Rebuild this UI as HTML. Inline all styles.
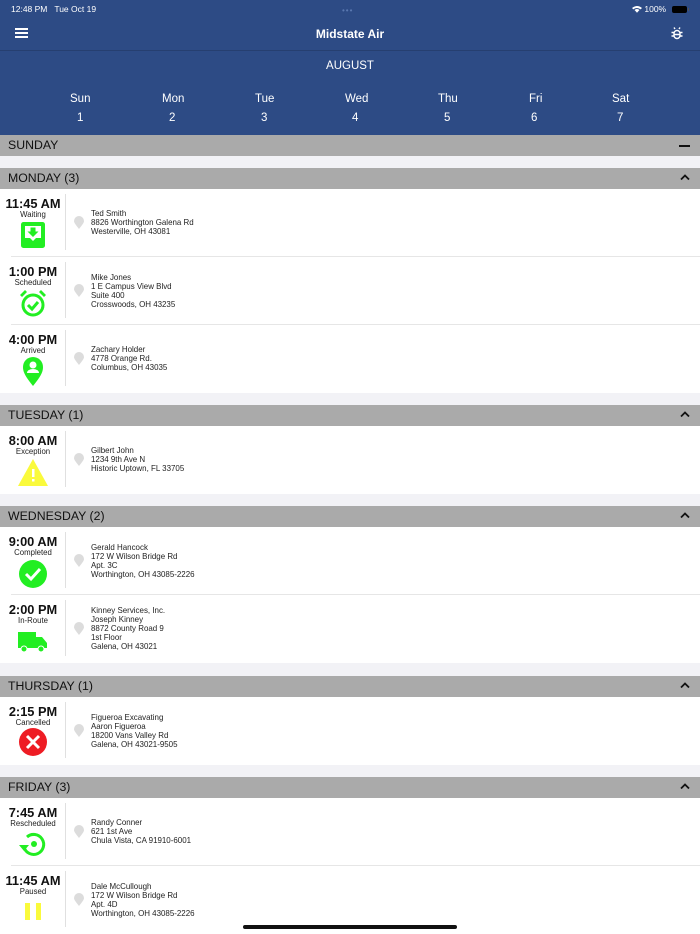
<!DOCTYPE html>
<html><head><meta charset="utf-8">
<style>
*{margin:0;padding:0;box-sizing:border-box}
body{width:700px;height:934px;overflow:hidden;background:#fff;font-family:"Liberation Sans",sans-serif;position:relative}
.a{position:absolute}
.blue{background:#2d4b85;color:#fff}
.hdr{position:absolute;left:0;width:700px;height:21px;background:#aaaaaa;font-size:12.3px;color:#111;padding-left:8px;line-height:21px}
.gap{position:absolute;left:0;width:700px;background:#f2f2f6}
.chev{position:absolute;right:9px;top:5px;width:12px;height:8px}
.row{position:absolute;left:0;width:700px;height:68px}
.sep{position:absolute;left:11px;right:0;bottom:0;height:1px;background:#e6e6e6}
.time{position:absolute;left:0;width:66px;text-align:center;top:7px;font-size:12.8px;font-weight:bold;color:#111}
.st{position:absolute;left:0;width:66px;text-align:center;top:21px;font-size:7.8px;color:#222}
.ic{position:absolute;left:18px;top:31px;width:30px;height:30px}
.vd{position:absolute;left:65px;top:5px;width:1px;height:56px;background:#e0e0e0}
.pin{position:absolute;left:74px;top:27px;width:10px;height:13px}
.txt{position:absolute;left:91px;top:0;height:67px;display:flex;flex-direction:column;justify-content:center;font-size:7.95px;line-height:9px;color:#222}
</style></head><body>
<div class="a blue" style="left:0;top:0;width:700px;height:135px"></div>
<div class="a" style="left:0;top:50px;width:700px;height:1px;background:#263f70"></div>
<div class="a" style="left:11px;top:4px;font-size:8.5px;color:#fff">12:48 PM&nbsp;&nbsp; Tue Oct 19</div>
<div class="a" style="left:342px;top:6px;font-size:8px;color:#5a78b0;letter-spacing:1px">•••</div>
<div class="a" style="left:632px;top:4px;font-size:8.5px;color:#fff">
<svg width="10" height="8" viewBox="0 0 10 8" style="vertical-align:-1px"><path d="M0 3Q5-1 10 3L8.6 4.4Q5 1.5 1.4 4.4Z M2.5 5Q5 3 7.5 5L5 7.8Z" fill="#fff"/></svg> 100%</div>
<div class="a" style="left:672px;top:6px;width:15px;height:7px;background:#000;border-radius:2px"></div>
<div class="a" style="left:688px;top:8px;width:1px;height:3px;background:#555"></div>
<div class="a" style="left:15px;top:28px;width:13px;height:2px;background:#fff;box-shadow:0 4px 0 #fff,0 8px 0 #fff"></div>
<div class="a" style="left:0;top:27px;width:700px;text-align:center;font-size:12px;font-weight:bold;color:#fff">Midstate Air</div>
<svg class="a" style="left:671px;top:27px" width="12" height="13" viewBox="0 0 12 13"><g fill="none" stroke="#fff" stroke-width="1.4"><rect x="3" y="3.5" width="6" height="8" rx="3"/><path d="M4 2L3 0.5M8 2L9 0.5M0.5 5.5H3M9 5.5H11.5M0.5 9H3M9 9H11.5M3.5 7.5H8.5"/></g></svg>
<div class="a" style="left:0;top:60px;width:700px;text-align:center;font-size:11.5px;color:#fff">AUGUST</div>
<div class="a" style="left:0;top:93px;width:700px;font-size:11.5px;color:#fff">
<span class="a" style="left:70px">Sun</span><span class="a" style="left:162px">Mon</span><span class="a" style="left:255px">Tue</span><span class="a" style="left:345px">Wed</span><span class="a" style="left:438px">Thu</span><span class="a" style="left:529px">Fri</span><span class="a" style="left:612px">Sat</span>
<span class="a" style="left:77px;top:19px">1</span><span class="a" style="left:169px;top:19px">2</span><span class="a" style="left:261px;top:19px">3</span><span class="a" style="left:352px;top:19px">4</span><span class="a" style="left:444px;top:19px">5</span><span class="a" style="left:531px;top:19px">6</span><span class="a" style="left:617px;top:19px">7</span>
</div>

<div class="hdr" style="top:135px">SUNDAY<span class="a" style="right:10px;top:10px;width:11px;height:2px;background:#111"></span></div>
<div class="gap" style="top:156px;height:12px"></div>

<div class="hdr" style="top:168px">MONDAY (3)<svg class="chev" viewBox="0 0 12 8"><path d="M2 6.5L6 2.5 10 6.5" fill="none" stroke="#111" stroke-width="1.8"/></svg></div>
<div class="row" style="top:189px"><div class="time">11:45 AM</div><div class="st">Waiting</div>
<svg class="ic" viewBox="0 0 30 30"><rect x="3" y="2" width="24" height="26" rx="2.5" fill="#22ee22"/><path d="M7 6h16v12h-5l-3 3-3-3H7z" fill="#fff"/><path d="M12.5 7.5h5v4h3l-5.5 5.5-5.5-5.5h3z" fill="#22ee22"/></svg>
<div class="vd"></div><svg class="pin" viewBox="0 0 10 13"><path d="M5 13C1 8 0 6.5 0 5a5 5 0 0 1 10 0c0 1.5-1 3-5 8z" fill="#dcdcdc"/></svg>
<div class="txt">Ted Smith<br>8826 Worthington Galena Rd<br>Westerville, OH 43081</div><div class="sep"></div></div>
<div class="row" style="top:257px"><div class="time">1:00 PM</div><div class="st">Scheduled</div>
<svg class="ic" viewBox="0 0 30 30"><g fill="none" stroke="#22ee22" stroke-width="3"><circle cx="15" cy="17" r="10"/><path d="M10 17l4 4 6-7"/></g><path d="M2 7l5-5 2 2-5 5zM28 7l-5-5-2 2 5 5z" fill="#22ee22"/></svg>
<div class="vd"></div><svg class="pin" viewBox="0 0 10 13"><path d="M5 13C1 8 0 6.5 0 5a5 5 0 0 1 10 0c0 1.5-1 3-5 8z" fill="#dcdcdc"/></svg>
<div class="txt">Mike Jones<br>1 E Campus View Blvd<br>Suite 400<br>Crosswoods, OH 43235</div><div class="sep"></div></div>
<div class="row" style="top:325px"><div class="time">4:00 PM</div><div class="st">Arrived</div>
<svg class="ic" viewBox="0 0 30 30"><path d="M15 30C7 20 5 16 5 11a10 10 0 0 1 20 0c0 5-2 9-10 19z" fill="#22ee22"/><circle cx="15" cy="9" r="3.5" fill="#fff"/><path d="M9 17a6 4 0 0 1 12 0z" fill="#fff"/></svg>
<div class="vd"></div><svg class="pin" viewBox="0 0 10 13"><path d="M5 13C1 8 0 6.5 0 5a5 5 0 0 1 10 0c0 1.5-1 3-5 8z" fill="#dcdcdc"/></svg>
<div class="txt">Zachary Holder<br>4778 Orange Rd.<br>Columbus, OH 43035</div></div>
<div class="gap" style="top:393px;height:12px"></div>

<div class="hdr" style="top:405px">TUESDAY (1)<svg class="chev" viewBox="0 0 12 8"><path d="M2 6.5L6 2.5 10 6.5" fill="none" stroke="#111" stroke-width="1.8"/></svg></div>
<div class="row" style="top:426px"><div class="time">8:00 AM</div><div class="st">Exception</div>
<svg class="ic" viewBox="0 0 30 30"><path d="M15 2L30 29H0z" fill="#fafa3c"/><rect x="14" y="12" width="2.5" height="8" fill="#fff"/><rect x="14" y="22" width="2.5" height="2.5" fill="#fff"/></svg>
<div class="vd"></div><svg class="pin" viewBox="0 0 10 13"><path d="M5 13C1 8 0 6.5 0 5a5 5 0 0 1 10 0c0 1.5-1 3-5 8z" fill="#dcdcdc"/></svg>
<div class="txt">Gilbert John<br>1234 9th Ave N<br>Historic Uptown, FL 33705</div></div>
<div class="gap" style="top:494px;height:12px"></div>

<div class="hdr" style="top:506px">WEDNESDAY (2)<svg class="chev" viewBox="0 0 12 8"><path d="M2 6.5L6 2.5 10 6.5" fill="none" stroke="#111" stroke-width="1.8"/></svg></div>
<div class="row" style="top:527px"><div class="time">9:00 AM</div><div class="st">Completed</div>
<svg class="ic" viewBox="0 0 30 30"><circle cx="15" cy="16" r="14" fill="#22ee22"/><path d="M8 16l5 5 9-10" fill="none" stroke="#fff" stroke-width="3"/></svg>
<div class="vd"></div><svg class="pin" viewBox="0 0 10 13"><path d="M5 13C1 8 0 6.5 0 5a5 5 0 0 1 10 0c0 1.5-1 3-5 8z" fill="#dcdcdc"/></svg>
<div class="txt">Gerald Hancock<br>172 W Wilson Bridge Rd<br>Apt. 3C<br>Worthington, OH 43085-2226</div><div class="sep"></div></div>
<div class="row" style="top:595px"><div class="time">2:00 PM</div><div class="st">In-Route</div>
<svg class="ic" viewBox="0 0 30 30"><rect x="0" y="6" width="18" height="16" fill="#22ee22"/><path d="M18 11h6l5 6v5H18z" fill="#22ee22"/><circle cx="6" cy="23" r="3" fill="#22ee22" stroke="#fff" stroke-width="1"/><circle cx="23" cy="23" r="3" fill="#22ee22" stroke="#fff" stroke-width="1"/></svg>
<div class="vd"></div><svg class="pin" viewBox="0 0 10 13"><path d="M5 13C1 8 0 6.5 0 5a5 5 0 0 1 10 0c0 1.5-1 3-5 8z" fill="#dcdcdc"/></svg>
<div class="txt">Kinney Services, Inc.<br>Joseph Kinney<br>8872 County Road 9<br>1st Floor<br>Galena, OH 43021</div></div>
<div class="gap" style="top:663px;height:13px"></div>

<div class="hdr" style="top:676px">THURSDAY (1)<svg class="chev" viewBox="0 0 12 8"><path d="M2 6.5L6 2.5 10 6.5" fill="none" stroke="#111" stroke-width="1.8"/></svg></div>
<div class="row" style="top:697px"><div class="time">2:15 PM</div><div class="st">Cancelled</div>
<svg class="ic" viewBox="0 0 30 30"><circle cx="15" cy="14" r="14" fill="#ee1c24"/><path d="M9 8l12 12M21 8L9 20" stroke="#fff" stroke-width="3"/></svg>
<div class="vd"></div><svg class="pin" viewBox="0 0 10 13"><path d="M5 13C1 8 0 6.5 0 5a5 5 0 0 1 10 0c0 1.5-1 3-5 8z" fill="#dcdcdc"/></svg>
<div class="txt">Figueroa Excavating<br>Aaron Figueroa<br>18200 Vans Valley Rd<br>Galena, OH 43021-9505</div></div>
<div class="gap" style="top:765px;height:12px"></div>

<div class="hdr" style="top:777px">FRIDAY (3)<svg class="chev" viewBox="0 0 12 8"><path d="M2 6.5L6 2.5 10 6.5" fill="none" stroke="#111" stroke-width="1.8"/></svg></div>
<div class="row" style="top:798px"><div class="time">7:45 AM</div><div class="st">Rescheduled</div>
<svg class="ic" viewBox="0 0 30 30"><path d="M6 18A10 10 0 1 0 9 8" fill="none" stroke="#22ee22" stroke-width="3"/><path d="M1 16h10l-5 6z" fill="#22ee22"/><circle cx="16" cy="15" r="3" fill="#22ee22"/></svg>
<div class="vd"></div><svg class="pin" viewBox="0 0 10 13"><path d="M5 13C1 8 0 6.5 0 5a5 5 0 0 1 10 0c0 1.5-1 3-5 8z" fill="#dcdcdc"/></svg>
<div class="txt">Randy Conner<br>621 1st Ave<br>Chula Vista, CA 91910-6001</div><div class="sep"></div></div>
<div class="row" style="top:866px"><div class="time">11:45 AM</div><div class="st">Paused</div>
<svg class="ic" viewBox="0 0 30 30"><rect x="7" y="6" width="5" height="17" fill="#fafa3c"/><rect x="18" y="6" width="5" height="17" fill="#fafa3c"/></svg>
<div class="vd"></div><svg class="pin" viewBox="0 0 10 13"><path d="M5 13C1 8 0 6.5 0 5a5 5 0 0 1 10 0c0 1.5-1 3-5 8z" fill="#dcdcdc"/></svg>
<div class="txt">Dale McCullough<br>172 W Wilson Bridge Rd<br>Apt. 4D<br>Worthington, OH 43085-2226</div></div>
<div class="a" style="left:243px;top:925px;width:214px;height:4px;border-radius:2px;background:#111"></div>
</body></html>
